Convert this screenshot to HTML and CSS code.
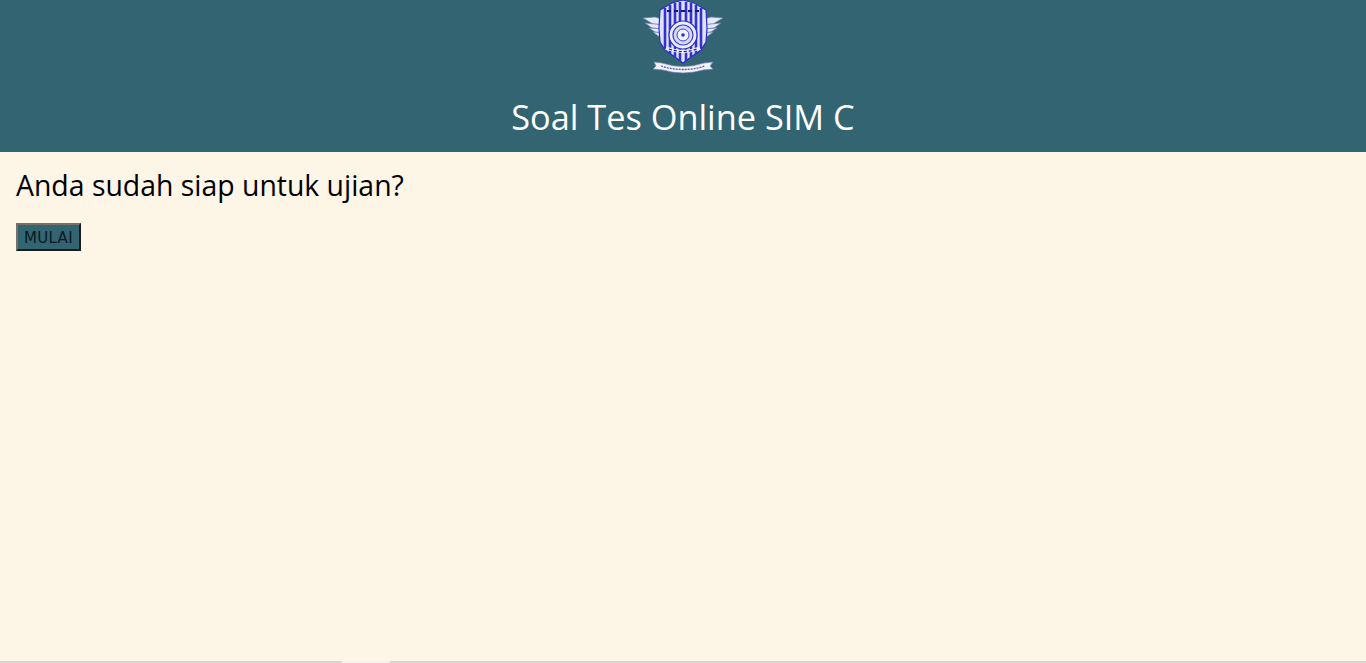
FILE: index.html
```html
<!DOCTYPE html>
<html lang="en">
<head>
  <meta charset="UTF-8" />
  <title>Soal Tes Online SIM C</title>
  <link rel="stylesheet" href="styles.css">
</head>
<body>

  <header>
    <svg class="logo" viewBox="0 0 80 76" width="80" height="76">
      <!-- wings -->
      <g fill="#e6e9f8" stroke="#6f7cba" stroke-width="0.7">
        <path d="M0 18 L12 17 L22 20 L22 25 L10 24 Z"/>
        <path d="M2 23 L22 25 L22 29 L9 28 Z"/>
        <path d="M6 28 L22 29 L22 33 L12 32 Z"/>
        <path d="M10 32 L22 33 L22 37 L15 36 Z"/>
        <path d="M80 18 L68 17 L58 20 L58 25 L70 24 Z"/>
        <path d="M78 23 L58 25 L58 29 L71 28 Z"/>
        <path d="M74 28 L58 29 L58 33 L68 32 Z"/>
        <path d="M70 32 L58 33 L58 37 L65 36 Z"/>
      </g>
      <!-- shield -->
      <path d="M17 10 L29 3 L40 0 L51 3 L63 10 L64 28 L63 42 L58 50 L48 57 L40 63 L32 57 L22 50 L17 42 L16 28 Z" fill="#dfe2f8" stroke="#2a2ad0" stroke-width="1.2"/>
      <g stroke="#3232cc" stroke-width="2.6">
        <path d="M22 8 V49"/>
        <path d="M27 5 V54"/>
        <path d="M32 3 V57"/>
        <path d="M37 2 V61"/>
        <path d="M43 2 V61"/>
        <path d="M48 3 V57"/>
        <path d="M53 5 V54"/>
        <path d="M58 8 V49"/>
      </g>
      <path d="M24 11 H56" stroke="#16168c" stroke-width="2" stroke-dasharray="4 3"/>
      <path d="M23 48 Q40 55 57 48" fill="none" stroke="#eceefb" stroke-width="3"/>
      <path d="M26 49 Q40 54 54 49" fill="none" stroke="#1c1c9a" stroke-width="1.2" stroke-dasharray="3 2"/>
      <!-- center seal -->
      <circle cx="40" cy="35" r="14" fill="#eceefb" stroke="#2a2ad0" stroke-width="1.2"/>
      <circle cx="40" cy="35" r="10" fill="#d6d9f6" stroke="#3c3cd4" stroke-width="1.2"/>
      <circle cx="40" cy="35" r="6" fill="#f2f3fd" stroke="#4444d8" stroke-width="1"/>
      <circle cx="40" cy="35" r="1.8" fill="#2a2ad0"/>
      <!-- ribbon -->
      <path d="M11 62 L19 63 Q40 70 61 63 L70 62 L67 66 L70 69 L60 70 Q40 76 20 70 L10 69 L13 66 Z" fill="#f0f1f9" stroke="#7a82bc" stroke-width="0.7"/>
      <path d="M18 66 Q40 73 62 66" fill="none" stroke="#5a5f9c" stroke-width="1.3" stroke-dasharray="2 1"/>
    </svg>
    <h1>Soal Tes Online SIM C</h1>
  </header>

  <main>
    <h2>Anda sudah siap untuk ujian?</h2>
    <button type="button">MULAI</button>
  </main>

  <div class="scrollbar"><div class="thumb"></div></div>

</body>
</html>
```

FILE: styles.css
```css
* {
  box-sizing: border-box;
}
html, body {
  height: 100%;
}
body {
  font-family: "Open Sans", "Noto Sans", Arial, sans-serif;
  margin: 0;
  background-color: #fdf5e6;
  display: flex;
  flex-direction: column;
  overflow: hidden;
}
header {
  background-color: #326472;
  height: 152px;
  display: flex;
  flex-direction: column;
  align-items: center;
}
.logo {
  display: block;
  flex: none;
}
h1 {
  margin: 0;
  padding-top: 18px;
  color: white;
  font-size: 34.3px;
  line-height: 46px;
  font-weight: 400;
}
main {
  flex: 1;
  padding: 14px 16px;
}
h2 {
  margin: 0 0 19px;
  font-size: 28.4px;
  line-height: 38px;
  font-weight: 400;
  color: #000;
}
button {
  display: block;
  width: 65px;
  height: 28px;
  padding: 1px 0 0;
  background-color: #326472;
  color: #0a1a20;
  font-family: "DejaVu Sans", Verdana, sans-serif;
  font-size: 15px;
  letter-spacing: 0.3px;
  border: 2px solid;
  border-color: #76706a #1c1c1c #1c1c1c #76706a;
}
.scrollbar {
  height: 2px;
  background-color: #d6d6d6;
  padding-left: 342px;
}
.thumb {
  width: 48px;
  height: 2px;
  background-color: #f3f3f3;
}
```
